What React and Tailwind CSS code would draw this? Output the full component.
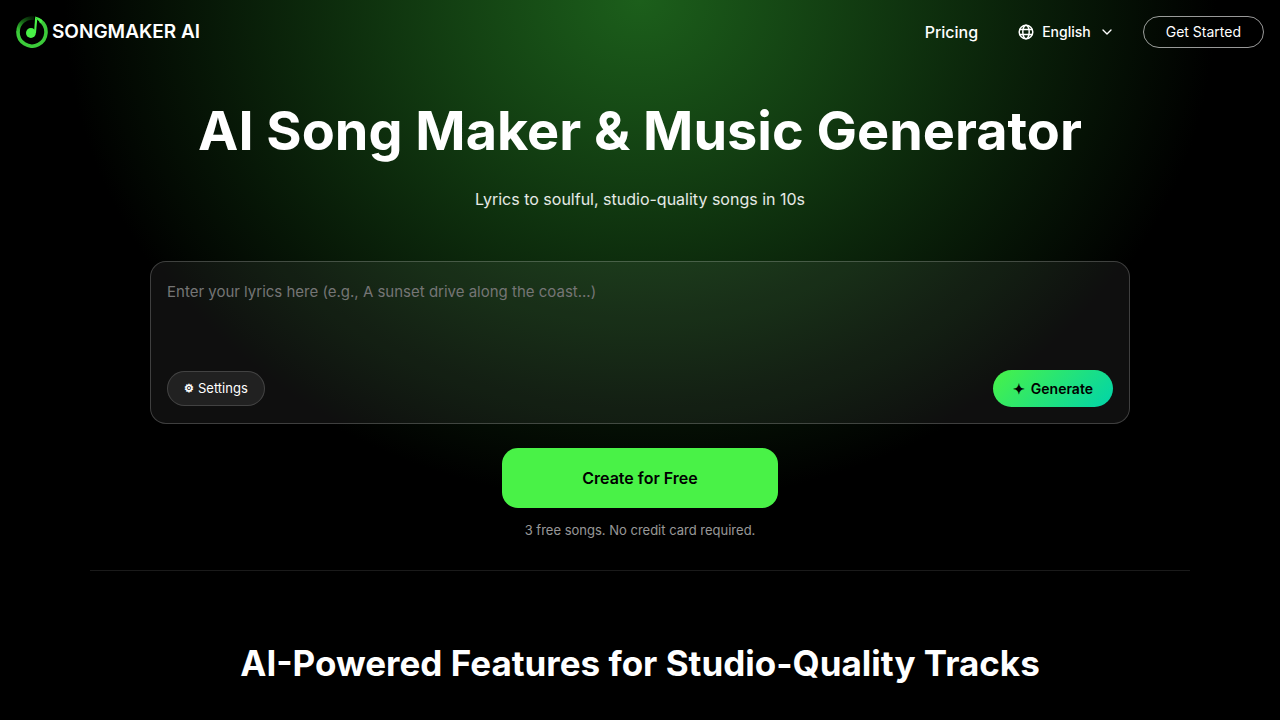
import React from 'react';
import { ChevronDown } from 'lucide-react';

const languages = ['English', 'Español', 'Deutsch', 'Français'];

function Logo() {
  return (
    <svg viewBox="0 0 32 32" className="size-8" aria-hidden="true">
      <defs>
        <linearGradient id="logo-ring" x1="0.9" y1="0" x2="0.1" y2="0.9">
          <stop offset="0" stopColor="#062006" />
          <stop offset="0.45" stopColor="#145c14" />
          <stop offset="1" stopColor="#35c033" />
        </linearGradient>
      </defs>
      <path d="M18 2.2A14 14 0 0 0 2 16" fill="none" stroke="url(#logo-ring)" strokeWidth="3.6" />
      <path d="M2 15.5A14 14 0 1 0 24 4.6" fill="none" stroke="#3ccb3a" strokeWidth="3.6" />
      <path d="M18.6 17L19.2 0.6C20.4 3.8 23 5 25 7.2L26.4 4.4C24.6 2.6 22.4 1.4 19.2 0.6Z" fill="#49f247" />
      <path d="M19.2 0.6L21.2 3.6L20 17H18Z" fill="#49f247" />
      <circle cx="14.9" cy="17" r="4.9" fill="#49f247" />
    </svg>
  );
}

function GlobeIcon() {
  return (
    <svg viewBox="0 0 16 16" className="size-4" fill="none" stroke="currentColor" strokeWidth="1.5" aria-hidden="true">
      <circle cx="8" cy="8" r="6.8" />
      <ellipse cx="8" cy="8" rx="3.2" ry="6.8" />
      <path d="M1.6 5.6h12.8M1.6 10.4h12.8" />
    </svg>
  );
}

function Header() {
  return (
    <header className="flex h-16 items-center justify-between px-4">
      <a href="#" className="flex items-center gap-1 text-[19px] font-semibold">
        <Logo />
        SONGMAKER AI
      </a>

      <nav className="flex items-center">
        <a href="#pricing" className="mr-10 text-base font-medium">Pricing</a>
        <label className="mr-7 flex items-center gap-2 text-sm font-medium">
          <GlobeIcon />
          <select aria-label="Language" className="field-sizing-content appearance-none bg-transparent outline-none">
            {languages.map((language) => (
              <option key={language} className="bg-black">{language}</option>
            ))}
          </select>
          <ChevronDown className="size-4" />
        </label>
        <button type="button" className="h-8 rounded-full border border-white/60 px-[22px] text-sm">
          Get Started
        </button>
      </nav>
    </header>
  );
}

function LyricsForm() {
  return (
    <form className="flex w-full max-w-[980px] flex-col rounded-2xl border border-white/20 bg-white/6 p-4">
      <textarea
        aria-label="Lyrics"
        placeholder="Enter your lyrics here (e.g., A sunset drive along the coast...)"
        className="h-[92px] w-full resize-none bg-transparent text-[15px] leading-7 outline-none placeholder:text-[#757575]"
      />
      <div className="flex items-center justify-between">
        <button
          type="button"
          className="flex h-[35px] items-center gap-1 rounded-full border border-white/15 bg-white/8 px-4 text-[13px]"
        >
          <span className="text-[11px] font-bold">⚙</span>
          Settings
        </button>
        <button
          type="button"
          className="flex h-[37px] items-center gap-1.5 rounded-full bg-[linear-gradient(135deg,#49f247,#00d4aa)] px-5 text-sm font-semibold text-black"
        >
          <span>✦</span>
          Generate
        </button>
      </div>
    </form>
  );
}

export default function App() {
  return (
    <div className="min-h-screen bg-black bg-[radial-gradient(576px_504px_at_50%_0,#1c5f1b,#000)] bg-no-repeat font-[Inter,sans-serif] text-white">
      <Header />

      <main className="flex flex-col items-center px-4">
        <section className="flex w-full flex-col items-center pt-8">
          <h1 className="text-center text-[54px] leading-[69px] font-bold">AI Song Maker &amp; Music Generator</h1>
          <p className="mt-5 mb-12 text-base leading-7 text-white/90">Lyrics to soulful, studio-quality songs in 10s</p>
          <LyricsForm />
          <button type="button" className="mt-6 h-[60px] rounded-2xl bg-[#49f247] px-20 text-base font-semibold text-black">
            Create for Free
          </button>
          <p className="mt-3 text-[13px] leading-5 text-white/60">3 free songs. No credit card required.</p>
        </section>

        <section className="mt-[30px] flex w-full max-w-[1100px] justify-center border-t border-white/10 pt-[68px] pb-10">
          <h2 className="text-center text-[35px] leading-12 font-bold">AI-Powered Features for Studio-Quality Tracks</h2>
        </section>
      </main>
    </div>
  );
}
